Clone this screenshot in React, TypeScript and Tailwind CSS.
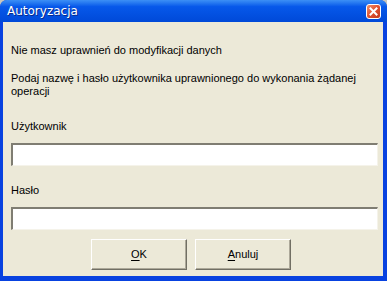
import React from "react"

function CloseButton() {
  return (
    <div className="flex h-[15px] w-[15px] items-center justify-center rounded-[3px] border border-white bg-gradient-to-br from-[#f0906a] via-[#e0502e] to-[#c13a1f]">
      <svg width="9" height="9" viewBox="0 0 9 9">
        <path d="M1.5 1.5 L7.5 7.5 M7.5 1.5 L1.5 7.5" stroke="white" strokeWidth="2" strokeLinecap="square" />
      </svg>
    </div>
  )
}

function Field({ label }: { label: string }) {
  return (
    <div className="flex flex-col">
      <div className="h-[13px] leading-[13px]">{label}</div>
      <div className="mt-[10px] h-[23px] border-t-2 border-l-2 border-t-[#7f7d72] border-l-[#7f7d72] border-r border-b border-r-[#f5f3ea] border-b-[#f5f3ea] bg-white" />
    </div>
  )
}

function XpButton({ accel, rest }: { accel: string; rest: string }) {
  return (
    <button className="h-[31px] w-[96px] border border-t-white border-l-white border-r-[#716f64] border-b-[#716f64] bg-[#ece9d8] shadow-[inset_-1px_-1px_0_#aca899]">
      <span className="underline underline-offset-2">{accel}</span>
      {rest}
    </button>
  )
}

export default function App() {
  return (
    <div className="h-[281px] w-[387px] bg-[#c9c7bd] text-[11px] text-black" style={{ fontFamily: '"Liberation Sans", Arial, sans-serif' }}>
      <div className="flex h-full w-full flex-col overflow-hidden rounded-t-[7px] bg-[#0842e0]">
        <div className="flex h-[22px] items-center justify-between bg-gradient-to-b from-[#3c8ff5] via-[#0758ea] via-30% to-[#0049d8] pl-[7px] pr-[6px]">
          <span className="text-[12px] text-white [text-shadow:1px_1px_0_#0a2a8a]" style={{ fontFamily: '"DejaVu Sans", sans-serif' }}>
            Autoryzacja
          </span>
          <CloseButton />
        </div>
        <div className="ml-[3px] mr-[4px] mb-[5px] flex flex-1 flex-col bg-[#ece9d8] pt-[22px] pl-[8px] pr-[5px]">
          <p className="leading-[13px]">Nie masz uprawnień do modyfikacji danych</p>
          <p className="mt-[15px] leading-[13px]">
            Podaj nazwę i hasło użytkownika uprawnionego do wykonania żądanej
            <br />
            operacji
          </p>
          <div className="mt-[22px]">
            <Field label="Użytkownik" />
          </div>
          <div className="mt-[18px]">
            <Field label="Hasło" />
          </div>
          <div className="mt-[9px] ml-[80px] flex gap-[8px]">
            <XpButton accel="O" rest="K" />
            <XpButton accel="A" rest="nuluj" />
          </div>
        </div>
      </div>
    </div>
  )
}
